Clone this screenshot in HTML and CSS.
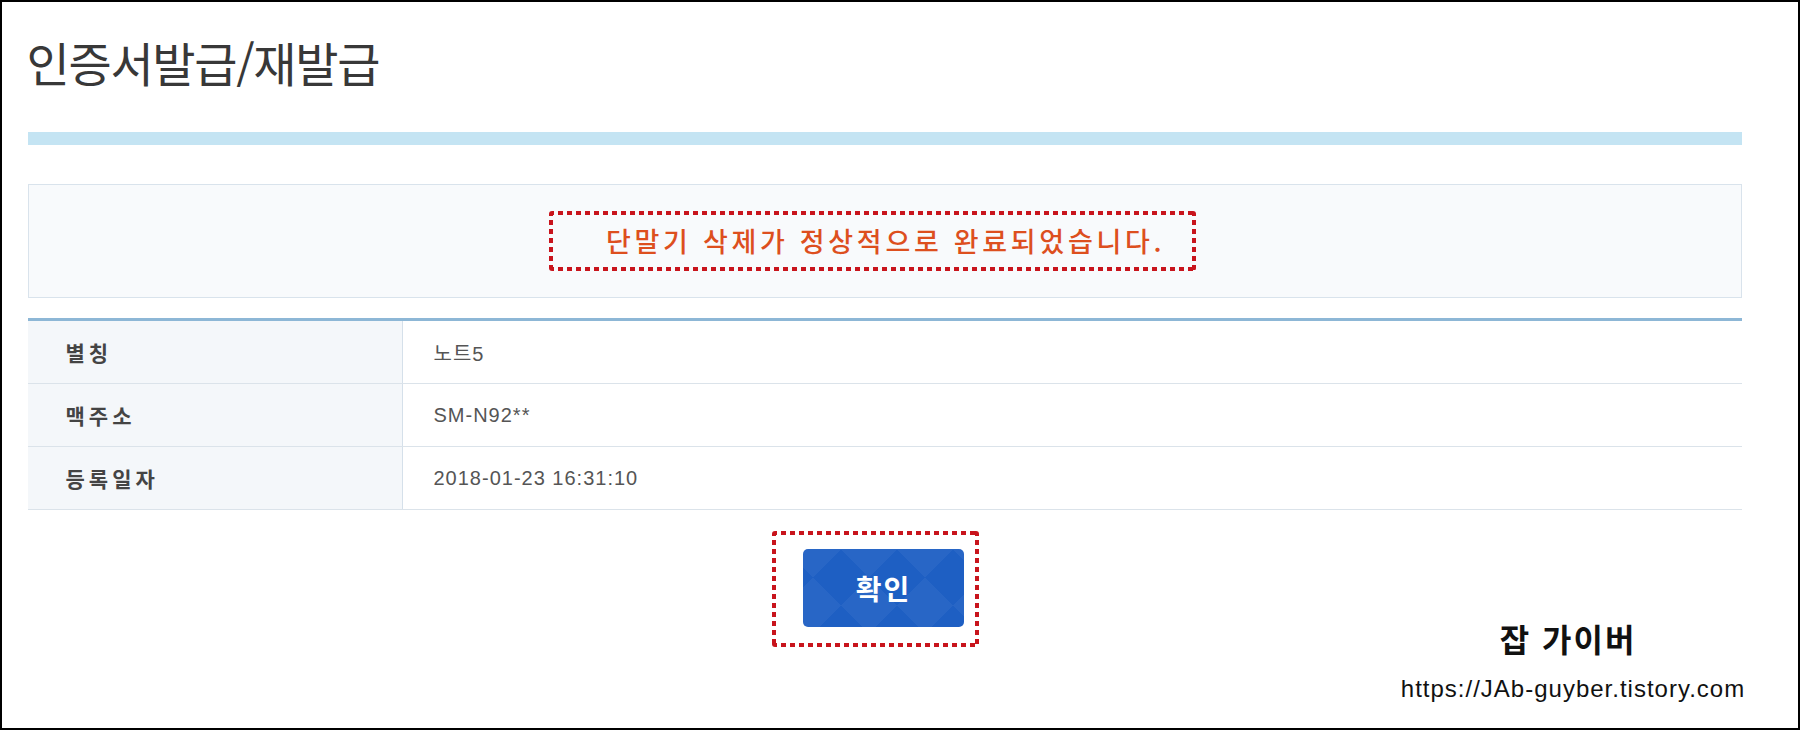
FILE: index.html
```html
<!DOCTYPE html>
<html lang="ko">
<head>
<meta charset="utf-8">
<title>인증서발급/재발급</title>
<link rel="stylesheet" href="styles.css">
</head>
<body>
<div class="page">
  <h1 class="title">인증서발급/재발급</h1>
  <div class="bar"></div>
  <div class="msg-box">
    <span class="dotted msg-mark"><span class="msg">단말기 삭제가 정상적으로 완료되었습니다.</span></span>
  </div>
  <div class="table">
    <div class="row"><div class="th">별칭</div><div class="td">노트5</div></div>
    <div class="row"><div class="th">맥주소</div><div class="td">SM-N92**</div></div>
    <div class="row"><div class="th">등록일자</div><div class="td">2018-01-23 16:31:10</div></div>
  </div>
  <div class="actions">
    <span class="dotted btn-mark"><button class="btn" type="button">확인</button></span>
  </div>
</div>
<div class="watermark">
  <div class="wm-name">잡 가이버</div>
  <div class="wm-url">https://JAb-guyber.tistory.com</div>
</div>
</body>
</html>
```

FILE: styles.css
```css
html, body {
  margin: 0;
  padding: 0;
}
body {
  width: 1800px;
  height: 730px;
  box-sizing: border-box;
  border: 2px solid #000;
  background: #fff;
  position: relative;
  overflow: hidden;
  font-family: "Noto Sans CJK KR", "Noto Sans", sans-serif;
}
.page {
  width: 1714px;
  margin-left: 25.5px;
}
.title {
  margin: 0;
  padding-top: 28px;
  height: 64px;
  font-size: 47px;
  line-height: 64px;
  font-weight: 400;
  color: #383838;
  letter-spacing: -1.3px;
  margin-left: -1px;
}
.bar {
  margin-top: 38px;
  height: 13px;
  background: #c4e4f3;
}
.msg-box {
  margin-top: 39px;
  height: 112px;
  border: 1px solid #d9e3ec;
  background: #f8fafc;
  display: flex;
  align-items: center;
  justify-content: center;
}
.dotted {
  display: inline-flex;
  align-items: center;
  box-sizing: border-box;
  background:
    repeating-linear-gradient(90deg, #c8141c 0 5px, transparent 5px 9px) left top / 100% 4px no-repeat,
    repeating-linear-gradient(90deg, #c8141c 0 5px, transparent 5px 9px) left bottom / 100% 4px no-repeat,
    repeating-linear-gradient(180deg, #c8141c 0 5px, transparent 5px 9px) left top / 4px 100% no-repeat,
    repeating-linear-gradient(180deg, #c8141c 0 5px, transparent 5px 9px) right top / 4px 100% no-repeat;
  border-radius: 3px;
}
.msg-mark {
  width: 647px;
  height: 60px;
  padding-left: 57px;
  margin-right: 24px;
}
.msg {
  font-size: 27px;
  font-weight: 500;
  letter-spacing: 3.7px;
  color: #dd4f1e;
  line-height: 30px;
  white-space: nowrap;
}
.table {
  margin-top: 20px;
  border-top: 3px solid #8db7d6;
}
.row {
  display: flex;
  height: 62px;
  border-bottom: 1px solid #dbe3ea;
}
.th {
  width: 375px;
  border-right: 1px solid #d5e0ea;
  background: #f4f7fa;
  display: flex;
  align-items: center;
  padding-left: 38px;
  box-sizing: border-box;
  font-size: 21px;
  font-weight: 700;
  letter-spacing: 4px;
  color: #444;
}
.td {
  flex: 1;
  display: flex;
  align-items: center;
  padding-left: 31px;
  font-family: "Liberation Sans", "Noto Sans CJK KR", sans-serif;
  font-size: 20px;
  letter-spacing: 1px;
  color: #555;
}
.actions {
  margin-top: 21px;
  display: flex;
  justify-content: center;
}
.btn-mark {
  width: 207px;
  height: 116px;
  padding: 18px 15px 20px 31px;
  margin-right: 18px;
}
.btn {
  width: 161px;
  height: 78px;
  border: 0;
  border-radius: 5px;
  background-color: #1e5fc3;
  background-image:
    linear-gradient(45deg, rgba(255,255,255,.045) 25%, transparent 25%, transparent 75%, rgba(255,255,255,.045) 75%),
    linear-gradient(-45deg, rgba(255,255,255,.045) 25%, transparent 25%, transparent 75%, rgba(255,255,255,.045) 75%);
  background-size: 56px 56px;
  background-position: 10px 0;
  color: #fff;
  font-family: "Noto Sans CJK KR", sans-serif;
  font-size: 28px;
  font-weight: 700;
  letter-spacing: 2px;
  padding: 0;
}
.watermark {
  position: absolute;
  left: 1395px;
  top: 614px;
  width: 352px;
  text-align: center;
  color: #111;
}
.wm-name {
  font-family: "Noto Sans CJK KR", sans-serif;
  font-size: 32px;
  font-weight: 700;
  line-height: 44px;
  letter-spacing: 2px;
  margin-right: 10px;
}
.wm-url {
  font-family: "Liberation Sans", sans-serif;
  font-size: 24px;
  line-height: 30px;
  letter-spacing: 1px;
  margin-top: 14px;
}
```
